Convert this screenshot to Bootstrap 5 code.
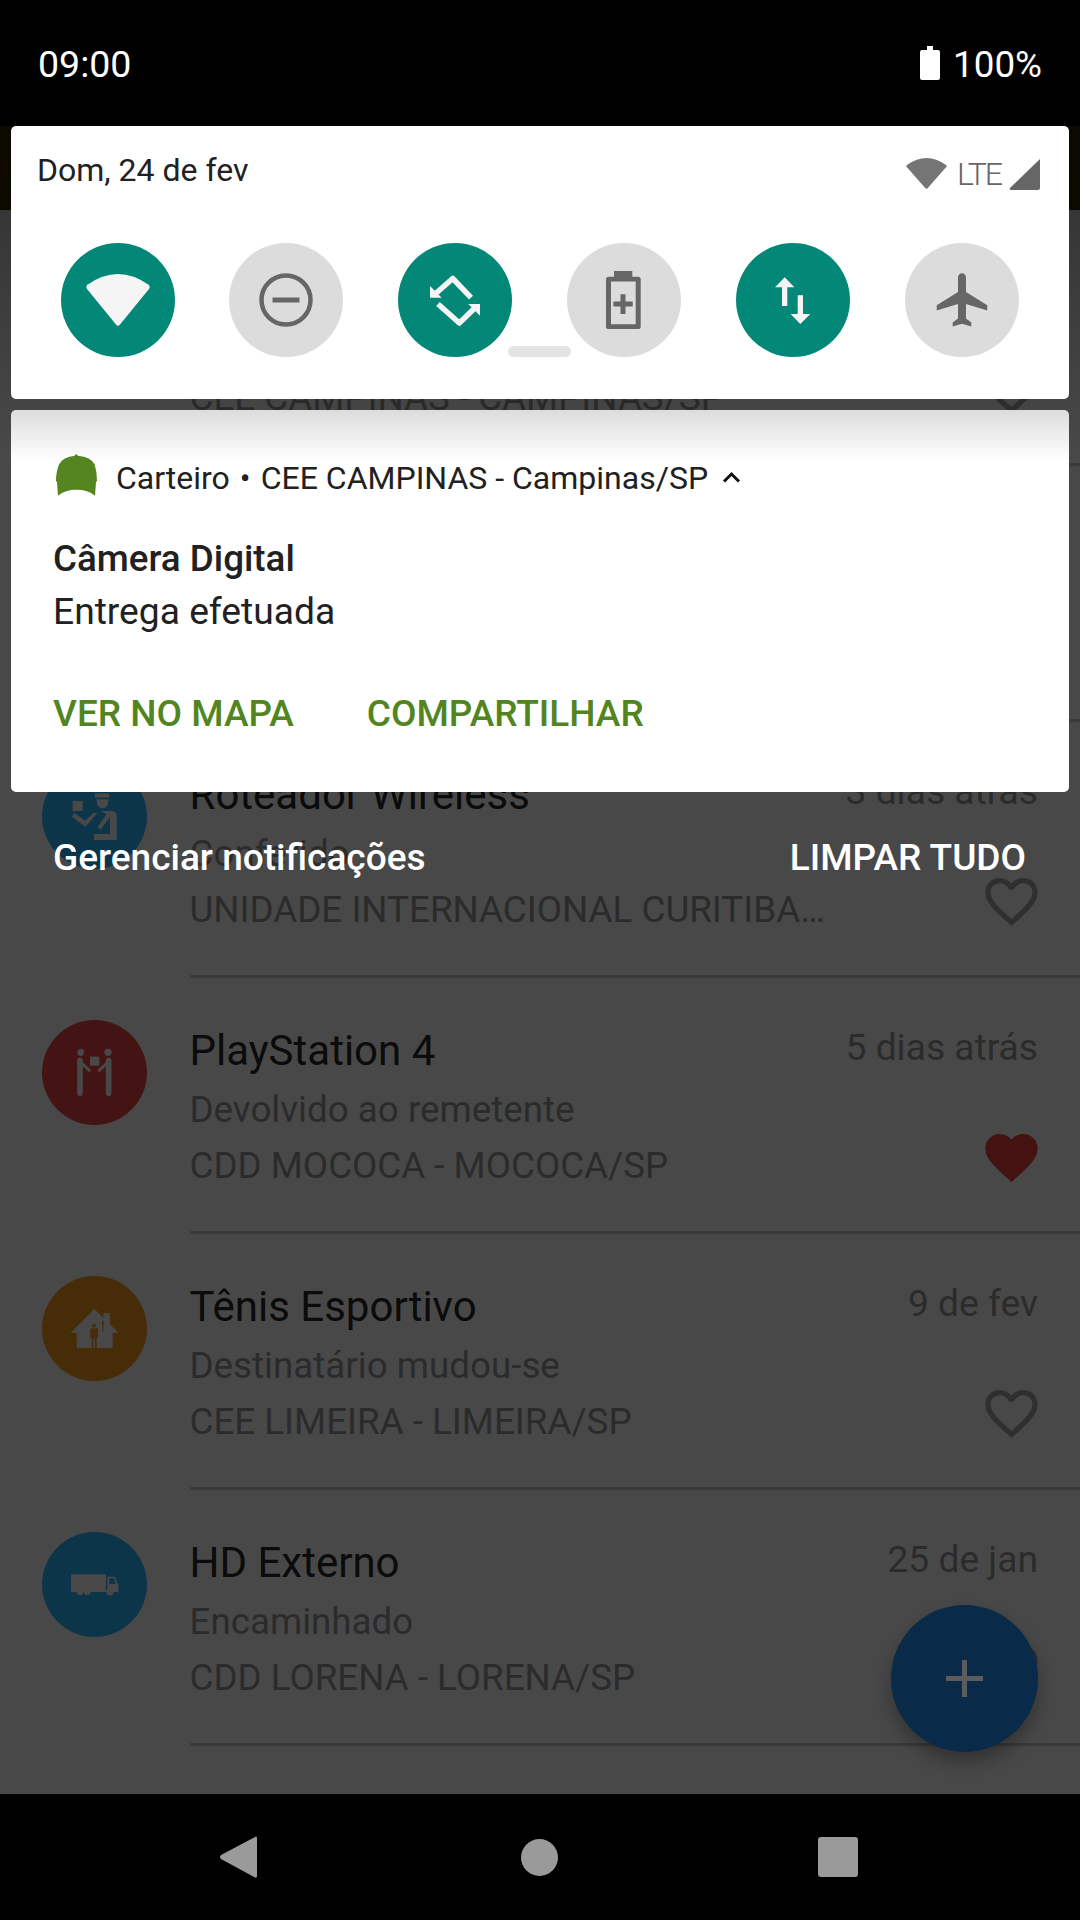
<!DOCTYPE html>
<html lang="pt-BR">
<head>
    <meta charset="UTF-8">
    <meta name="viewport" content="width=device-width, initial-scale=1.0">
    <title>Carteiro</title>
    <link href="https://cdn.jsdelivr.net/npm/bootstrap@5.3.0/dist/css/bootstrap.min.css" rel="stylesheet">
    <style>
        body { background: #000; font-family: Roboto, "Liberation Sans", sans-serif; }
        .phone { width: 1080px; height: 1920px; background: #484848; overflow: hidden; }
        .status-bar { height: 126px; flex: none; background: #000; color: #fff; padding: 0 38px; font-size: 36.75px; line-height: 52px; }
        .status-bar svg { margin-right: 13px; }
        .status-time { font-size: 37.5px; padding-top: 2px; }
        .status-pct { padding-top: 4px; }
        .app-bar { height: 84px; background: #120d00; }
        .app-main { height: 1668px; flex: none; }
        .nav-keys { height: 126px; flex: none; background: #000; gap: 262px; padding-right: 2px; }
        .nav-home { margin: 0 -2px 0 2px; }

        .pack-row { height: 256px; }
        .pack-icon { width: 105px; height: 105px; flex: none; margin: 42px 42.5px 0 42px; border-radius: 50%; }
        .pack-icon svg { display: block; }
        .pack-body { flex: 1; min-width: 0; padding: 45px 42px 0 0; border-bottom: 3px solid #3a3a3a; }
        .pack-title { font-size: 42px; line-height: 56px; color: #0b0b0b; }
        .pack-date { font-size: 37.2px; line-height: 49px; color: #2b2b2b; }
        .pack-sub { font-size: 36.75px; line-height: 55px; color: #2b2b2b; margin-top: 3px; }
        .pack-loc { font-size: 36.75px; line-height: 55px; color: #2b2b2b; margin-top: 1px; }
        .pack-heart { margin-top: -3px; flex: none; fill: #2f2f2f; }
        .pack-heart.on { fill: #441210; }
        .tone-red { background: #441414; }
        .tone-amber { background: #472c08; }
        .tone-blue { background: #0c3549; }

        .top-shadow { left: 0; right: 0; top: 126px; height: 330px; background: linear-gradient(rgba(0,0,0,.34), rgba(0,0,0,0)); }
        .shade { left: 11px; top: 126px; width: 1058px; gap: 11px; }
        .qs-card { height: 273px; padding: 19px 29px 0 26px; border-radius: 5px; color: #212121; }
        .qs-date { font-size: 32px; line-height: 50px; }
        .qs-lte { font-size: 32px; line-height: 40px; font-weight: 300; letter-spacing: -2px; color: #666; margin: 9px 8px 0 10px; }
        .qs-wifi { margin-top: 12px; }
        .qs-signal { margin-top: 14px; }
        .qs-tiles { margin: 48px 21px 0 24px; }
        .qs-tile { width: 114px; height: 114px; border-radius: 50%; }
        .qs-tile:nth-child(2), .qs-tile:nth-child(3) { margin: 0 1px 0 -1px; }
        .qs-tile svg { display: block; }
        .qs-on { background: #038878; }
        .qs-off { background: #dcdcdc; }
        .qs-handle { width: 63px; height: 11px; left: 497px; top: 220px; background: #e4e4e4; border-radius: 5.5px; }

        .notif { height: 382px; padding: 43px 42px 0; border-radius: 5px; color: #212121; background: linear-gradient(#dcdcdc, #fff 50px); }
        .notif-head { font-size: 32px; line-height: 50px; }
        .notif-cap { margin: 1px 19px 0 2px; flex: none; }
        .notif-sep { margin: 0 10px; }
        .notif-chev { margin: 18px 0 0 14px; }
        .notif-title { font-size: 36.75px; line-height: 52px; font-weight: 500; margin-top: 30px; }
        .notif-text { font-size: 37.2px; line-height: 52px; }
        .notif-actions { gap: 73px; margin-top: 51px; }
        .notif-btn { font-size: 37px; line-height: 52px; font-weight: 500; color: #528520; padding: 0; border: 0; border-radius: 0; }
        .shade-foot { padding: 29px 43px 0 42px; color: #fff; font-size: 37px; line-height: 52px; font-weight: 500; }

        .fab { width: 147px; height: 147px; left: 891px; top: 1605px; background: #092a48; border-radius: 50%; box-shadow: 0 10px 18px rgba(0,0,0,.3); }
    </style>
</head>
<body class="m-0">
    <svg width="0" height="0" class="position-absolute">
        <symbol id="heart-line" viewBox="2 3 20 18.35"><path d="M16.5 3c-1.74 0-3.41.81-4.5 2.09C10.91 3.81 9.24 3 7.5 3 4.42 3 2 5.42 2 8.5c0 3.78 3.4 6.86 8.55 11.54L12 21.35l1.45-1.32C18.6 15.36 22 12.28 22 8.5 22 5.42 19.58 3 16.5 3zm-4.4 15.55l-.1.1-.1-.1C7.14 14.24 4 11.39 4 8.5 4 6.5 5.5 5 7.5 5c1.54 0 3.04.99 3.57 2.36h1.87C13.46 5.99 14.96 5 16.5 5c2 0 3.5 1.5 3.5 3.5 0 2.89-3.14 5.74-7.9 10.05z"/></symbol>
        <symbol id="heart-full" viewBox="2 3 20 18.35"><path d="M12 21.35l-1.45-1.32C5.4 15.36 2 12.28 2 8.5 2 5.42 4.42 3 7.5 3c1.74 0 3.41.81 4.5 2.09C13.09 3.81 14.76 3 16.5 3 19.58 3 22 5.42 22 8.5c0 3.78-3.4 6.86-8.55 11.54L12 21.35z"/></symbol>
    </svg>

    <div class="phone position-relative d-flex flex-column">
        <div class="status-bar d-flex justify-content-between align-items-center">
            <span class="status-time">09:00</span>
            <span class="d-flex align-items-center">
                <svg width="20" height="34" viewBox="0 0 20 34"><path d="M7 0h6v4h5a2 2 0 0 1 2 2v26a2 2 0 0 1-2 2H2a2 2 0 0 1-2-2V6a2 2 0 0 1 2-2h5z" fill="#fff"/></svg>
                <span class="status-pct">100%</span>
            </span>
        </div>

        <main class="app-main">
            <div class="app-bar"></div>

            <div class="pack-row d-flex">
                <div class="pack-icon"></div>
                <div class="pack-body">
                    <div class="pack-title">&nbsp;</div>
                    <div class="pack-sub">&nbsp;</div>
                    <div class="d-flex justify-content-between align-items-start">
                        <div class="pack-loc">CEE CAMPINAS - CAMPINAS/SP</div>
                        <svg class="pack-heart" width="53" height="48"><use href="#heart-line"/></svg>
                    </div>
                </div>
            </div>

            <div class="pack-row d-flex">
                <div class="pack-icon"></div>
                <div class="pack-body"></div>
            </div>

            <div class="pack-row d-flex">
                <div class="pack-icon tone-blue">
                    <svg width="105" height="105" viewBox="0 0 105 105"><g transform="translate(-12 -4) scale(.3333)" fill="#484848">
                        <path d="M195 100h43v13h-43z"/><path d="M200 118h35q2 27-17 27t-18-27z"/><path d="M128 123h30v30h-30z"/>
                        <path d="M133 158l32 24 26-24 12 0-37 42-40-30z"/>
                        <path d="M212 153h36q12 2 12 16v71h-68v-18h48v-52l-28 40-10-8 28-40z"/>
                    </g></svg>
                </div>
                <div class="pack-body">
                    <div class="d-flex justify-content-between align-items-start">
                        <div class="pack-title">Roteador Wireless</div>
                        <div class="pack-date">3 dias atrás</div>
                    </div>
                    <div class="pack-sub">Conferido</div>
                    <div class="d-flex justify-content-between align-items-start">
                        <div class="pack-loc">UNIDADE INTERNACIONAL CURITIBA…</div>
                        <svg class="pack-heart" width="53" height="48"><use href="#heart-line"/></svg>
                    </div>
                </div>
            </div>

            <div class="pack-row d-flex">
                <div class="pack-icon tone-red">
                    <svg width="105" height="105" viewBox="0 0 105 105"><g transform="translate(-12 -10) scale(.3333)" fill="#484848" stroke="#484848" stroke-linecap="round">
                        <circle cx="152" cy="128" r="10" stroke="none"/><circle cx="234" cy="127" r="11" stroke="none"/>
                        <path d="M170 122l-18-4v-3z" stroke="none"/>
                        <path d="M150 152v98M236 152v98" stroke-width="17" fill="none"/>
                        <path d="M150 155l28 26M236 155l-28 26" stroke-width="9" fill="none"/>
                        <path d="M180 140h28v27h-28z" stroke="none"/>
                    </g></svg>
                </div>
                <div class="pack-body">
                    <div class="d-flex justify-content-between align-items-start">
                        <div class="pack-title">PlayStation 4</div>
                        <div class="pack-date">5 dias atrás</div>
                    </div>
                    <div class="pack-sub">Devolvido ao remetente</div>
                    <div class="d-flex justify-content-between align-items-start">
                        <div class="pack-loc">CDD MOCOCA - MOCOCA/SP</div>
                        <svg class="pack-heart on" width="53" height="48"><use href="#heart-full"/></svg>
                    </div>
                </div>
            </div>

            <div class="pack-row d-flex">
                <div class="pack-icon tone-amber">
                    <svg width="105" height="105" viewBox="0 0 105 105"><g transform="translate(-12 -11) scale(.3333)">
                        <path d="M193 132l27 26v-14h20v34l25 25h-17v46H140v-46h-18z" fill="#484848"/>
                        <g fill="#472c08"><circle cx="192" cy="182" r="6"/><path d="M181 190h23v29h-4v30h-5v-26h-5v26h-5v-30h-4z"/><path d="M216 168h5l-1 24h-3z"/><circle cx="218.500" cy="197" r="3"/></g>
                    </g></svg>
                </div>
                <div class="pack-body">
                    <div class="d-flex justify-content-between align-items-start">
                        <div class="pack-title">Tênis Esportivo</div>
                        <div class="pack-date">9 de fev</div>
                    </div>
                    <div class="pack-sub">Destinatário mudou-se</div>
                    <div class="d-flex justify-content-between align-items-start">
                        <div class="pack-loc">CEE LIMEIRA - LIMEIRA/SP</div>
                        <svg class="pack-heart" width="53" height="48"><use href="#heart-line"/></svg>
                    </div>
                </div>
            </div>

            <div class="pack-row d-flex">
                <div class="pack-icon tone-blue">
                    <svg width="105" height="105" viewBox="0 0 105 105"><g transform="translate(-12 -12) scale(.3333)">
                        <g fill="#484848"><path d="M123 163h105v50H123z"/><path d="M232 170h22l11 24v21h-33z"/><path d="M123 213h142v3H123z"/><circle cx="150" cy="215" r="10"/><circle cx="172" cy="215" r="10"/><circle cx="240" cy="215" r="11"/></g>
                        <path d="M238 175h13l7 17h-20z" fill="#0c3549"/>
                    </g></svg>
                </div>
                <div class="pack-body">
                    <div class="d-flex justify-content-between align-items-start">
                        <div class="pack-title">HD Externo</div>
                        <div class="pack-date">25 de jan</div>
                    </div>
                    <div class="pack-sub">Encaminhado</div>
                    <div class="d-flex justify-content-between align-items-start">
                        <div class="pack-loc">CDD LORENA - LORENA/SP</div>
                        <svg class="pack-heart" width="53" height="48"><use href="#heart-line"/></svg>
                    </div>
                </div>
            </div>
        </main>

        <nav class="nav-keys d-flex justify-content-center align-items-center">
            <svg width="37" height="42" viewBox="0 0 37 42"><path d="M36 0.500Q37 .500 37 2V40q0 2-2 1.500L1 23q-2-2 0-4z" fill="#9a9a9a"/></svg>
            <svg class="nav-home" width="37" height="37" viewBox="0 0 37 37"><circle cx="18.500" cy="18.500" r="18.500" fill="#9a9a9a"/></svg>
            <svg width="40" height="40" viewBox="0 0 40 40"><rect width="40" height="40" rx="3" fill="#9a9a9a"/></svg>
        </nav>

        <div class="top-shadow position-absolute"></div>

        <button class="fab position-absolute border-0 d-flex align-items-center justify-content-center p-0" type="button">
            <svg width="37" height="37" viewBox="0 0 37 37"><path d="M16 0h5v16h16v5H21v16h-5V21H0v-5h16z" fill="#5c5c5c"/></svg>
        </button>

        <div class="shade position-absolute d-flex flex-column">
            <div class="qs-card card border-0 position-relative d-block">
                <div class="d-flex justify-content-between align-items-start">
                    <div class="qs-date">Dom, 24 de fev</div>
                    <div class="d-flex align-items-start">
                        <svg class="qs-wifi" width="41" height="32" viewBox="0 0 41 32"><path d="M1 8Q20.500-6 40 8q1.200 1 .3 2L22 30.800q-1.500 1.700-3 0L.7 10Q-.2 9 1 8z" fill="#757575"/></svg>
                        <span class="qs-lte">LTE</span>
                        <svg class="qs-signal" width="31" height="31" viewBox="0 0 31 31"><path d="M31 0v29q0 2-2 2H2q-2 0-1-2z" fill="#666"/></svg>
                    </div>
                </div>
                <div class="qs-tiles d-flex justify-content-between">
                    <div class="qs-tile qs-on">
                        <svg width="114" height="114" viewBox="0 0 114 114"><path d="M26 42Q57 20 88 42q1.500 2 0 4L59 81.500q-2 2.500-4 0L26 46q-1.500-2 0-4z" fill="#f5f5f5"/></svg>
                    </div>
                    <div class="qs-tile qs-off">
                        <svg width="114" height="114" viewBox="0 0 114 114"><circle cx="57" cy="57" r="24.500" fill="none" stroke="#666" stroke-width="4.500"/><path d="M43.500 54.500h27v5h-27z" fill="#666"/></svg>
                    </div>
                    <div class="qs-tile qs-on">
                        <svg width="114" height="114" viewBox="0 0 114 114"><g fill="none" stroke="#f5f5f5" stroke-width="5.500" stroke-linejoin="round"><path d="M36 52L54.700 35.500 73 54.700"/><path d="M40 61L61.300 80 79 63"/></g><g fill="#f5f5f5"><path d="M32 43v11.700h11.700z"/><path d="M82 61v11.700L70.300 61z"/></g></svg>
                    </div>
                    <div class="qs-tile qs-off">
                        <svg width="114" height="114" viewBox="0 0 114 114"><path d="M47 28h18.300v5.700H71q2.700 0 2.700 2.700v47Q73.700 86 71 86H41.700q-2.700 0-2.700-2.600v-47q0-2.700 2.700-2.700H47z" fill="#666"/><path d="M44 38.500h24.700v42.700H44z" fill="#dcdcdc"/><path d="M53.500 51.300h5v7.300h7.200v5h-7.200V71h-5v-7.400h-7.200v-5h7.200z" fill="#666"/></svg>
                    </div>
                    <div class="qs-tile qs-on">
                        <svg width="114" height="114" viewBox="0 0 114 114"><path d="M48.700 34.300l9.600 10h-7V63H46V44.300h-7z" fill="#f5f5f5"/><path d="M64.300 81l-9.600-10h7V52.300H67V71h7.300z" fill="#f5f5f5"/></svg>
                    </div>
                    <div class="qs-tile qs-off">
                        <svg width="114" height="114" viewBox="0 0 114 114"><g transform="translate(26.400 25) scale(2.660)"><path d="M21 16v-2l-8-5V3.500c0-.83-.67-1.500-1.500-1.500S10 2.670 10 3.500V9l-8 5v2l8-2.500V19l-2 1.500V22l3.500-1 3.500 1v-1.500L13 19v-5.500l8 2.500z" fill="#666"/></g></svg>
                    </div>
                </div>
                <div class="qs-handle position-absolute"></div>
            </div>

            <div class="notif card border-0 d-block">
                <div class="notif-head d-flex align-items-start">
                    <svg class="notif-cap" width="42" height="42" viewBox="45 43 127 125"><path d="M108 43q4 0 6 4 40 3 51 27 7 22 7 50l-3 3-3 41q-22-18-56-18t-56 18l-3-41-3-3q0-28 9-50 12-24 48-27 1-4 3-4z" fill="#558521"/></svg>
                    <span>Carteiro</span><span class="notif-sep">•</span><span>CEE CAMPINAS - Campinas/SP</span>
                    <svg class="notif-chev" width="19" height="12" viewBox="0 0 19 12"><path d="M2 10.500L9.500 3 17 10.500" fill="none" stroke="#111" stroke-width="3"/></svg>
                </div>
                <div class="notif-title">Câmera Digital</div>
                <div class="notif-text">Entrega efetuada</div>
                <div class="notif-actions d-flex">
                    <button class="btn notif-btn" type="button">VER NO MAPA</button>
                    <button class="btn notif-btn" type="button">COMPARTILHAR</button>
                </div>
            </div>

            <div class="shade-foot d-flex justify-content-between">
                <span>Gerenciar notificações</span>
                <span>LIMPAR TUDO</span>
            </div>
        </div>
    </div>

    <script src="https://cdn.jsdelivr.net/npm/bootstrap@5.3.0/dist/js/bootstrap.bundle.min.js"></script>
</body>
</html>
